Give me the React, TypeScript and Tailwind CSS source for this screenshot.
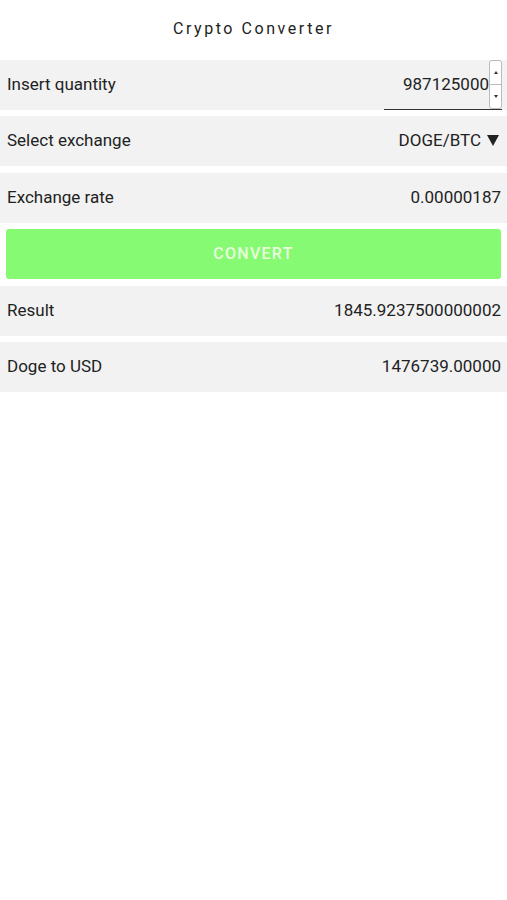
import { useState } from "react";

const font = { fontFamily: "Roboto, 'Noto Sans', sans-serif" };

const Row = ({ label, className = "", children }: { label: string; className?: string; children: React.ReactNode }) => (
  <div className={`flex h-[50px] items-center justify-between bg-[#f2f2f2] pl-[7px] pr-[6px] text-[17px] text-[#222] ${className}`}>
    <span>{label}</span>
    {children}
  </div>
);

export default function App() {
  const [qty] = useState("987125000");

  return (
    <div className="min-h-[900px] bg-white" style={font}>
      <h1 className="flex h-[60px] items-center justify-center pb-[3px] text-[16px] tracking-[0.16em] text-[#222]">
        Crypto Converter
      </h1>

      <div className="flex flex-col">
        <div className="flex h-[50px] items-stretch justify-between bg-[#f2f2f2] pl-[7px] pr-[5px] text-[17px] text-[#222]">
          <span className="self-center">Insert quantity</span>
          {/* number field with spinner */}
          <div className="flex w-[118px] items-stretch justify-end border-b border-[#333]">
            <span className="self-center pt-[1px]">{qty}</span>
            <div className="flex w-[13px] flex-col rounded-[3px] border border-[#bbb] bg-white">
              <div className="flex flex-1 items-center justify-center border-b border-[#bbb]">
                <span className="h-0 w-0 border-x-[2px] border-b-[3px] border-x-transparent border-b-[#333]" />
              </div>
              <div className="flex flex-1 items-center justify-center">
                <span className="h-0 w-0 border-x-[2px] border-t-[3px] border-x-transparent border-t-[#333]" />
              </div>
            </div>
          </div>
        </div>

        <Row label="Select exchange" className="mt-[6px]">
          <span className="mr-[2px] flex items-center gap-[6px]">
            DOGE/BTC
            <span className="mb-[1px] h-0 w-0 border-x-[6px] border-t-[11px] border-x-transparent border-t-[#222]" />
          </span>
        </Row>

        <Row label="Exchange rate" className="mt-[7px]">
          <span>0.00000187</span>
        </Row>

        <div className="mt-[6px] px-[6px]">
          <button className="flex h-[50px] w-full items-center justify-center rounded-[3px] bg-[#86fa72] text-[16px] font-medium tracking-[0.08em] text-[#e9fddf]">
            CONVERT
          </button>
        </div>

        <Row label="Result" className="mt-[7px]">
          <span>1845.9237500000002</span>
        </Row>

        <Row label="Doge to USD" className="mt-[6px]">
          <span>1476739.00000</span>
        </Row>
      </div>
    </div>
  );
}
